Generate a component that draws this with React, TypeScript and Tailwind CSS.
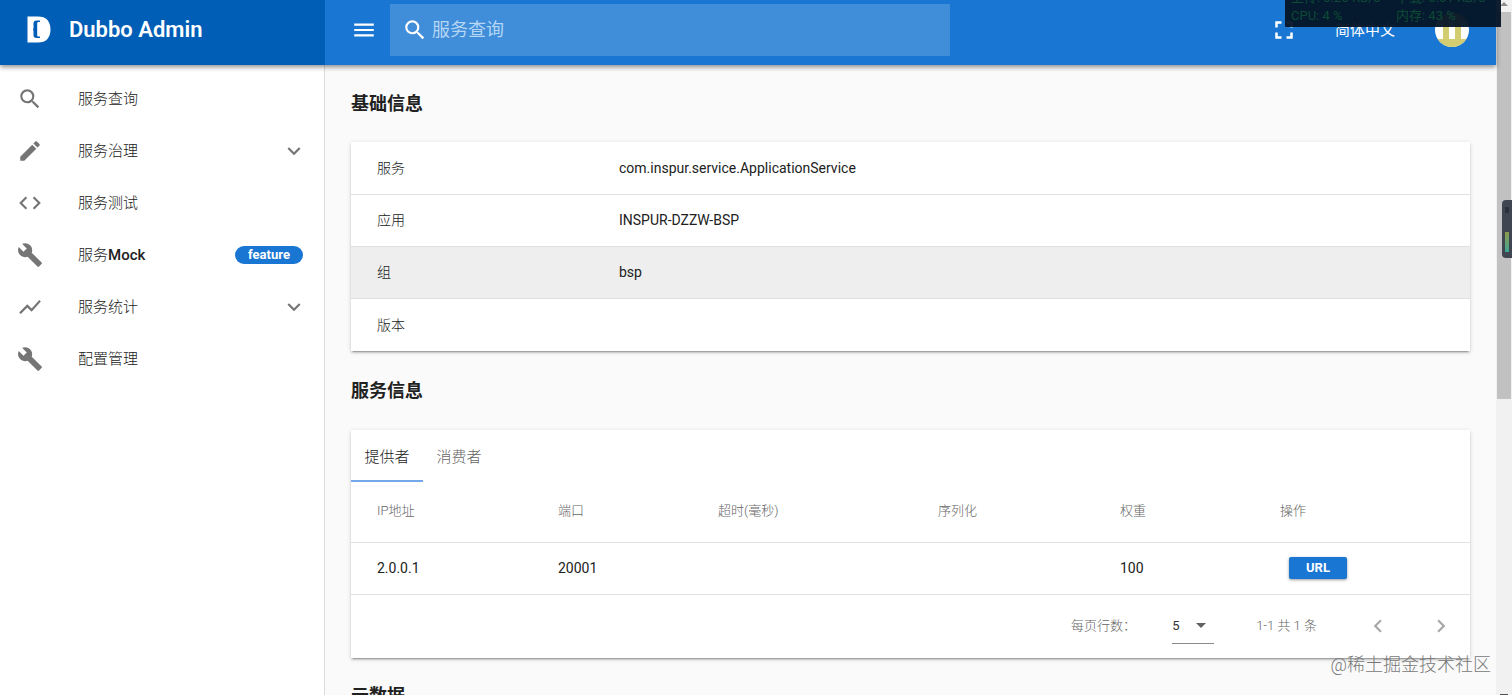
import {
  MdBuild,
  MdChevronLeft,
  MdChevronRight,
  MdCode,
  MdCreate,
  MdExpandMore,
  MdFullscreen,
  MdMenu,
  MdSearch,
  MdShowChart,
} from "react-icons/md";

const menu = [
  { title: "服务查询", icon: MdSearch },
  { title: "服务治理", icon: MdCreate, group: true },
  { title: "服务测试", icon: MdCode },
  { title: "服务", suffix: "Mock", icon: MdBuild, badge: "feature" },
  { title: "服务统计", icon: MdShowChart, group: true },
  { title: "配置管理", icon: MdBuild },
];

const basic = [
  { label: "服务", value: "com.inspur.service.ApplicationService" },
  { label: "应用", value: "INSPUR-DZZW-BSP" },
  { label: "组", value: "bsp", active: true },
  { label: "版本", value: "" },
];

const columns = [
  { title: "IP地址", width: "w-[181px]" },
  { title: "端口", width: "w-[160px]" },
  { title: "超时(毫秒)", width: "w-[220px]" },
  { title: "序列化", width: "w-[182px]" },
  { title: "权重", width: "w-[160px]" },
  { title: "操作", width: "" },
];

const providers = [{ ip: "2.0.0.1", port: "20001", timeout: "", serial: "", weight: "100" }];

const card = "bg-white shadow-[0_3px_1px_-2px_rgba(0,0,0,.2),0_2px_2px_0_rgba(0,0,0,.14),0_1px_5px_0_rgba(0,0,0,.12)]";

function Logo() {
  return (
    <svg viewBox="0 0 24 27" className="h-[27px] w-6" aria-hidden="true">
      <path
        fill="#fff"
        fillRule="evenodd"
        d="M0.500 0.500H11C19 0.500 23.500 5 23.500 13.500S19 26.500 11 26.500H0.500ZM13 4.500H9.500C7.500 4.500 6.500 5.500 6.500 7.500V12L6 13.500L6.500 15V19.500C6.500 21 7.500 22 9.500 22H13V20.500H11.500C10.500 20.500 10.200 20 10.200 19V7.500C10.200 6.500 10.500 6 11.500 6H13Z"
      />
    </svg>
  );
}

function Sidebar() {
  return (
    <aside className="w-[325px] shrink-0 border-r border-[#dcdcdc] bg-white pt-2">
      <nav>
        {menu.map((item) => {
          const Icon = item.icon;
          return (
            <a key={item.title} href="#" className="flex h-[52px] items-center pr-[17px] pl-[17px] text-[15px] text-[#212121]">
              <Icon size={26} className="text-[#757575]" />
              <span className="ml-[35px] flex-1 font-light">
                {item.title}
                {item.suffix && <span className="font-medium">{item.suffix}</span>}
              </span>
              {item.badge && (
                <span className="mr-1 flex h-[18px] w-[68px] items-center justify-center rounded-full bg-[#1976d2] text-[13px] font-bold text-white">
                  {item.badge}
                </span>
              )}
              {item.group && <MdExpandMore size={26} className="text-[#757575]" />}
            </a>
          );
        })}
      </nav>
    </aside>
  );
}

function Toolbar() {
  return (
    <header className="relative z-10 flex h-[65px] shrink-0 bg-[#1976d2] text-white shadow-[0_2px_5px_rgba(0,0,0,.45)]">
      <div className="flex w-[325px] shrink-0 items-center bg-[#005eb6] pb-[6px] pl-[27px]">
        <Logo />
        <span className="ml-[18px] text-[22px] font-semibold">Dubbo Admin</span>
      </div>
      <div className="flex flex-1 items-center pr-[27px] pb-[5px] pl-[26px]">
        <button aria-label="菜单">
          <MdMenu size={26} />
        </button>
        <label className="ml-[13px] flex h-[52px] w-[560px] items-center bg-[#408dd9] pl-3">
          <MdSearch size={26} />
          <input
            type="text"
            aria-label="服务查询"
            placeholder="服务查询"
            className="ml-1 flex-1 bg-transparent text-lg outline-none placeholder:text-[#b5d6f4]"
          />
        </label>
        <div className="flex-1" />
        <button aria-label="全屏">
          <MdFullscreen size={30} />
        </button>
        <button className="ml-9 text-[15px]">简体中文</button>
        <span className="ml-10 size-[34px] overflow-hidden rounded-full bg-white">
          <svg viewBox="0 0 34 34" aria-hidden="true">
            <path fill="#d2cd70" d="M0 0H34V8H0ZM8 8H14V26H8ZM20 8H26V26H20ZM0 26H34V34H0Z" />
          </svg>
        </span>
      </div>
    </header>
  );
}

function BasicInfo() {
  return (
    <table className={`w-full text-sm ${card}`}>
      <tbody>
        {basic.map((row) => (
          <tr
            key={row.label}
            className={`h-[52px] border-b border-[#e0e0e0] last:h-[53px] last:border-0 ${row.active ? "bg-[#eeeeee]" : ""}`}
          >
            <th scope="row" className="w-[242px] pl-[26px] text-left font-light">{row.label}</th>
            <td className="pl-[26px]">{row.value}</td>
          </tr>
        ))}
      </tbody>
    </table>
  );
}

function ServiceInfo() {
  return (
    <div className={card}>
      <div role="tablist" className="flex h-[52px] text-[15px] font-light">
        <button role="tab" aria-selected="true" className="w-[72px] border-b-2 border-[#73a9e8] pt-1">提供者</button>
        <button role="tab" aria-selected="false" className="w-[72px] border-b-2 border-transparent pt-1 text-[#666]">消费者</button>
      </div>

      <table className="w-full table-fixed text-sm">
        <thead>
          <tr className="h-[60px] border-b border-[#e0e0e0] text-[13px] text-[#666]">
            {columns.map((c) => (
              <th key={c.title} className={`pl-[26px] text-left font-light ${c.width}`}>{c.title}</th>
            ))}
          </tr>
        </thead>
        <tbody>
          {providers.map((p) => (
            <tr key={p.ip} className="h-[52px] border-b border-[#e0e0e0]">
              <td className="pl-[26px]">{p.ip}</td>
              <td className="pl-[26px]">{p.port}</td>
              <td className="pl-[26px]">{p.timeout}</td>
              <td className="pl-[26px]">{p.serial}</td>
              <td className="pl-[26px]">{p.weight}</td>
              <td className="pl-[35px]">
                <button className="block h-[22px] w-[58px] rounded-xs bg-[#1976d2] text-[13px] leading-[22px] font-bold text-white shadow-[0_1px_3px_rgba(0,0,0,.4)]">
                  URL
                </button>
              </td>
            </tr>
          ))}
        </tbody>
      </table>

      {/* pagination */}
      <div className="flex h-[63px] items-center justify-end pr-4 text-[13px] text-[#666]">
        <label htmlFor="rows" className="font-light">每页行数：</label>
        <span className="relative ml-9 flex h-9 w-[42px] items-center border-b border-[#8a8a8a]">
          <select id="rows" className="w-full appearance-none bg-transparent text-[#333]" defaultValue="5">
            <option>5</option>
            <option>10</option>
            <option>25</option>
          </select>
          <svg viewBox="0 0 10 5" className="pointer-events-none absolute right-2 h-[5px] w-[10px]" aria-hidden="true">
            <path d="M0 0H10L5 5Z" fill="#616161" />
          </svg>
        </span>
        <span className="ml-[42px] font-light">1-1 共 1 条</span>
        <button aria-label="上一页" className="ml-12 text-[#a8a8a8]">
          <MdChevronLeft size={26} />
        </button>
        <button aria-label="下一页" className="ml-[37px] text-[#a8a8a8]">
          <MdChevronRight size={26} />
        </button>
      </div>
    </div>
  );
}

/* CPU / network widget floating over the page */
function Monitor() {
  return (
    <>
      <div className="absolute top-0 right-[11px] z-20 h-[27px] w-[216px] overflow-hidden bg-[#041426]/95 text-[13px] text-[#0d4a35]">
        <div className="-mt-[11px] grid grid-cols-2 pl-[6px] leading-[18px] whitespace-nowrap">
          <span>上传: 0.20 KB/s</span>
          <span>下载: 0.51 KB/s</span>
          <span>CPU: 4 %</span>
          <span>内存: 43 %</span>
        </div>
      </div>
      <div className="absolute top-[200px] right-0 z-20 flex h-[58px] w-[10px] flex-col items-center justify-between rounded-l-sm bg-[#3f4652] pt-[7px] pb-[6px]">
        <span className="h-[6px] w-1 bg-[#2b313b]" />
        <span className="h-5 w-1 bg-linear-to-b from-[#8a9a45] to-[#35a592]" />
      </div>
    </>
  );
}

export default function App() {
  return (
    <div className="relative flex h-screen overflow-hidden bg-[#fafafa] font-['Roboto','Noto_Sans_CJK_SC',sans-serif] text-[#212121]">
      <div className="flex min-w-0 flex-1 flex-col">
        <Toolbar />
        <div className="flex min-h-0 flex-1">
          <Sidebar />
          <main className="min-w-0 flex-1 overflow-hidden pr-[26px] pl-[26px]">
            <h2 className="flex h-[77px] items-center text-lg font-bold">基础信息</h2>
            <BasicInfo />
            <h2 className="flex h-[79px] items-center text-lg font-bold">服务信息</h2>
            <ServiceInfo />
            <h2 className="flex h-[77px] items-center text-lg font-bold">元数据</h2>
          </main>
        </div>
      </div>

      {/* scrollbar */}
      <div className="flex w-4 shrink-0 flex-col items-center justify-between bg-[#f1f1f1]">
        <div className="flex flex-col items-center">
          <svg viewBox="0 0 8 4" className="mt-[2px] h-1 w-2" aria-hidden="true">
            <path d="M4 0L8 4H0Z" fill="#8b8b8b" />
          </svg>
          <span className="mt-[6px] h-[387px] w-[14px] bg-[#c1c1c1]" />
        </div>
        <span className="h-px w-2 bg-[#505050]" />
      </div>

      <Monitor />
      <span className="absolute right-[21px] bottom-[18px] text-lg leading-6 font-light text-[#777]">@稀土掘金技术社区</span>
    </div>
  );
}
